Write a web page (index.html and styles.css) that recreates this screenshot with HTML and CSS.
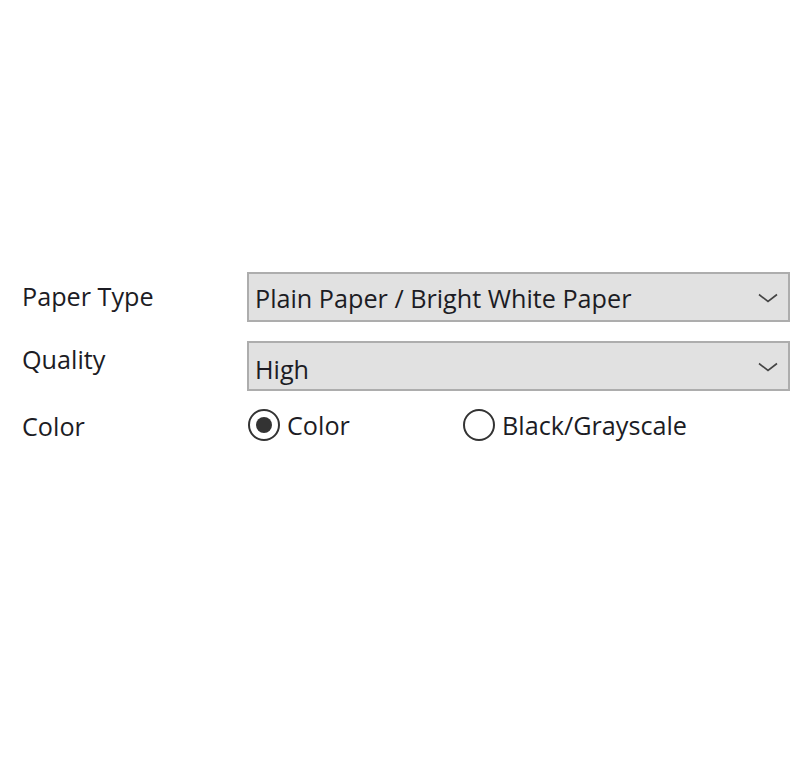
FILE: index.html
```html
<!DOCTYPE html>
<html>
<head>
<meta charset="utf-8">
<link rel="stylesheet" href="styles.css">
</head>
<body>
<div class="form">
  <div class="row row-paper">
    <div class="label lbl-paper">Paper Type</div>
    <div class="select">
      <span class="value">Plain Paper / Bright White Paper</span>
      <svg class="chev" width="20" height="10" viewBox="0 0 20 10"><path d="M1 1.5 L10 8.5 L19 1.5" fill="none" stroke="#444" stroke-width="1.6"/></svg>
    </div>
  </div>
  <div class="row row-quality">
    <div class="label lbl-quality">Quality</div>
    <div class="select">
      <span class="value">High</span>
      <svg class="chev" width="20" height="10" viewBox="0 0 20 10"><path d="M1 1.5 L10 8.5 L19 1.5" fill="none" stroke="#444" stroke-width="1.6"/></svg>
    </div>
  </div>
  <div class="row row-color">
    <div class="label lbl-color">Color</div>
    <div class="radios">
      <div class="radio radio-first">
        <span class="circle checked"><span class="dot"></span></span>
        <span class="rtext">Color</span>
      </div>
      <div class="radio">
        <span class="circle"></span>
        <span class="rtext">Black/Grayscale</span>
      </div>
    </div>
  </div>
</div>
</body>
</html>
```

FILE: styles.css
```css
html, body {
  margin: 0;
  padding: 0;
  background: #ffffff;
}
body {
  width: 800px;
  height: 760px;
  font-family: "Open Sans", "Noto Sans", sans-serif;
  font-size: 25.2px;
  color: #1c1c24;
}
.form {
  padding-top: 272px;
  padding-left: 22px;
  display: flex;
  flex-direction: column;
}
.row {
  display: flex;
  align-items: flex-start;
}
.row-quality {
  margin-top: 19px;
}
.row-color {
  margin-top: 14px;
  height: 40px;
}
.label {
  width: 225px;
  flex: none;
  line-height: 30px;
}
.lbl-paper { padding-top: 9px; }
.lbl-quality { padding-top: 3px; }
.lbl-color { padding-top: 6px; }
.select {
  box-sizing: border-box;
  width: 543px;
  height: 50px;
  background: #e1e1e1;
  border: 2px solid #adadad;
  display: flex;
  align-items: center;
  justify-content: space-between;
  padding: 0 10px 0 6px;
}
.row-quality .select .value { padding-top: 6px; }
.row-paper .select .value { padding-top: 2px; }
.value {
  line-height: 30px;
}
.chev {
  display: block;
  margin-top: 2px;
}
.radios {
  display: flex;
  align-items: center;
  height: 40px;
}
.radio {
  display: flex;
  align-items: center;
  gap: 7px;
}
.radio-first {
  width: 215px;
}
.circle {
  box-sizing: border-box;
  width: 32px;
  height: 32px;
  border-radius: 50%;
  border: 2px solid #333;
  background: #fff;
  display: flex;
  align-items: center;
  justify-content: center;
  flex: none;
  margin-left: 1px;
}
.circle.checked {
  border-width: 2.5px;
}
.dot {
  width: 16px;
  height: 16px;
  border-radius: 50%;
  background: #333;
}
.rtext {
  line-height: 30px;
}
```
